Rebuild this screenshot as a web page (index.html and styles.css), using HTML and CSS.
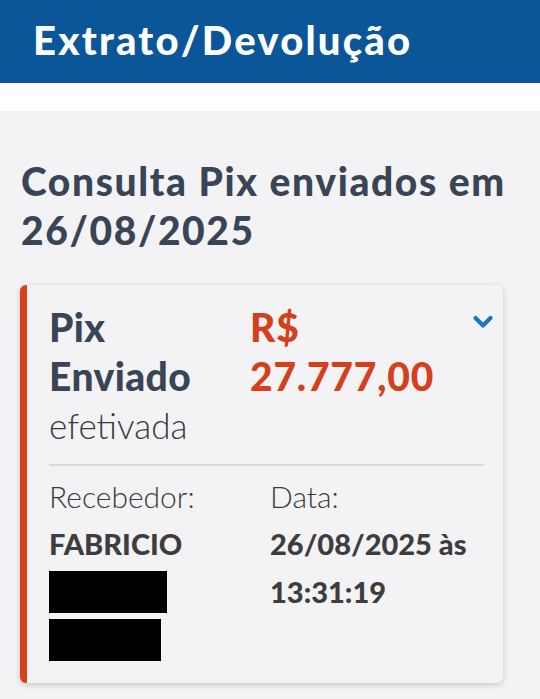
FILE: index.html
```html
<!DOCTYPE html>
<html lang="pt-BR">
<head>
  <meta charset="UTF-8">
  <meta name="viewport" content="width=device-width, initial-scale=1.0">
  <title>Extrato/Devolução</title>
  <link rel="stylesheet" href="styles.css">
</head>
<body>

  <header class="topbar">
    <h1>Extrato/Devolução</h1>
  </header>
  <div class="spacer"></div>

  <main class="content">
    <h2 class="page-title">Consulta Pix enviados em 26/08/2025</h2>

    <div class="pix-card">
      <div class="pix-head">
        <div class="pix-type">
          <strong>Pix<br>Enviado</strong>
          <span class="status">efetivada</span>
        </div>
        <div class="pix-amount">R$<br>27.777,00</div>
        <svg class="chevron" width="22" height="14" viewBox="0 0 22 14">
          <path d="M3.5 3 L11 10.5 L18.5 3" fill="none" stroke="#1b74c8" stroke-width="4.2" stroke-linecap="round" stroke-linejoin="round"/>
        </svg>
      </div>

      <div class="pix-details">
        <div class="detail">
          <span class="label">Recebedor:</span>
          <strong class="value">FABRICIO</strong>
          <!-- dados ocultados -->
          <div class="redacted r1"></div>
          <div class="redacted r2"></div>
        </div>
        <div class="detail">
          <span class="label">Data:</span>
          <strong class="value">26/08/2025 às<br>13:31:19</strong>
        </div>
      </div>
    </div>
  </main>

</body>
</html>
```

FILE: styles.css
```css
body {
  font-family: 'Lato', 'Open Sans', sans-serif;
  background-color: #f3f3f5;
  margin: 0;
  padding: 0;
  color: #383838;
}

.topbar {
  background-color: #0b5698;
  height: 83px;
  padding: 0 33px;
  box-sizing: border-box;
  display: flex;
  align-items: center;
}

.topbar h1 {
  margin: 0;
  color: #fff;
  font-size: 40px;
  line-height: 48px;
  font-weight: 900;
  letter-spacing: 2.2px;
  padding-bottom: 4px;
}

.spacer {
  height: 28px;
  background-color: #fff;
}

.content {
  padding: 46px 20px 16px 21px;
}

.page-title {
  margin: 0 0 30px;
  font-size: 39px;
  line-height: 49px;
  font-weight: 900;
  color: #394556;
  letter-spacing: 1.6px;
}

.pix-card {
  background-color: #f3f3f5;
  border-left: 7px solid #d7401c;
  border-radius: 6px;
  box-shadow: 0 2px 6px rgba(0, 0, 0, 0.18);
  margin: 0 17px 0 -1px;
  padding: 18px 19px 22px 22px;
}

.pix-head {
  display: grid;
  grid-template-columns: 201px 1fr 24px;
  padding-bottom: 17px;
  border-bottom: 2px solid #dadadc;
}

.pix-type strong {
  display: block;
  font-size: 39px;
  line-height: 49px;
  font-weight: 900;
  color: #394556;
  letter-spacing: 0.4px;
}

.status {
  display: block;
  font-size: 35px;
  line-height: 44px;
  font-weight: 300;
  color: #3a3a3a;
  margin-top: 2px;
}

.pix-amount {
  font-size: 39px;
  line-height: 49px;
  font-weight: 900;
  color: #d4401c;
  letter-spacing: 0.8px;
}

.chevron {
  justify-self: end;
  margin: 12px -10px 0 0;
}

.pix-details {
  display: grid;
  grid-template-columns: 221px 1fr;
  padding-top: 8px;
}

.label {
  display: block;
  font-size: 30px;
  line-height: 44px;
  font-weight: 300;
  color: #3a3a3a;
}

.value {
  display: block;
  margin-top: 2px;
  font-size: 29px;
  line-height: 48px;
  font-weight: 900;
  color: #3d3d40;
}

.redacted {
  background-color: #000;
  height: 42px;
}

.r1 {
  width: 118px;
  margin-top: 3px;
}

.r2 {
  width: 112px;
  margin-top: 6px;
}
```
